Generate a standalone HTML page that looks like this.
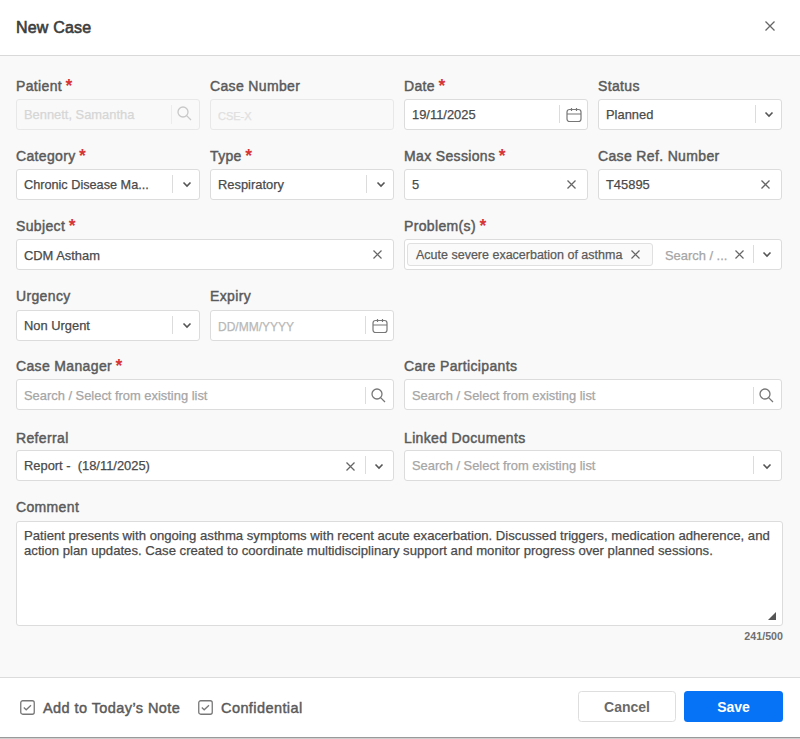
<!DOCTYPE html>
<html><head><meta charset="utf-8">
<style>
*{box-sizing:border-box;margin:0;padding:0}
html,body{width:800px;height:739px;overflow:hidden;background:#fff;font-family:"Liberation Sans",sans-serif}
.hdr{position:absolute;left:0;top:0;width:800px;height:56px;background:#fff;border-bottom:1px solid #d9d9d9}
.title{position:absolute;left:16px;top:18px;font-size:16px;-webkit-text-stroke:0.6px #3c3c3c;letter-spacing:0.2px;color:#3c3c3c;line-height:19px}
.close{position:absolute;left:764px;top:20px;width:12px;height:12px}
.body{position:absolute;left:0;top:56px;width:800px;height:621px;background:#f9f9f9}
.ftr{position:absolute;left:0;top:677px;width:800px;height:62px;background:#fff;border-top:1px solid #dcdcdc}
.bline{position:absolute;left:0;top:737px;width:800px;height:1px;background:#9a9a9a}
.bline2{position:absolute;left:0;top:738px;width:800px;height:1px;background:#cfcfcf}
.lbl{position:absolute;font-size:14px;color:#5a5a5a;-webkit-text-stroke:0.45px #5a5a5a;letter-spacing:0.35px;white-space:nowrap;line-height:17px}
.req{-webkit-text-stroke:0;color:#d63535;font-size:17.5px;font-weight:bold;letter-spacing:0;margin-left:3.5px;position:relative;top:0.5px;line-height:0}
.inp{position:absolute;height:31px;background:#fff;border:1px solid #dcdcdc;border-radius:3px}
.inp.dis{background:#f9f9f9;border-color:#e8e8e8}
.val{position:absolute;left:7px;top:7px;font-size:12.9px;color:#4a4a4a;-webkit-text-stroke:0.25px currentColor;white-space:nowrap;line-height:15px}
.ph{color:#a6a6a6}
.dph{color:#d6d6d6}
.sep{position:absolute;top:5px;width:1px;height:18px;background:#dcdcdc}
.ico{position:absolute}
.chip{position:absolute;left:2px;top:3px;width:246px;height:23px;background:#fafafa;border:1px solid #e0e0e0;border-radius:3px}
.cm{top:6px;font-size:13.15px;line-height:15px;width:755px;white-space:normal}
.cnt{position:absolute;left:730px;top:630px;width:53px;text-align:right;font-size:10.7px;font-weight:bold;color:#707070;line-height:12px}
svg{display:block}
.cb{position:absolute;top:22px}
.btn{position:absolute;top:13px;height:31px;border-radius:3.5px;font-size:14px;font-weight:bold;text-align:center}
</style></head><body>
<div class="hdr">
  <div class="title">New Case</div>
  <svg class="close" viewBox="0 0 12 12"><path d="M1.5 1.5L10.5 10.5M10.5 1.5L1.5 10.5" stroke="#666" stroke-width="1.3"/></svg>
</div>
<div class="body"></div>
<div class="lbl" style="left:16px;top:78px">Patient<span class="req">*</span></div>
<div class="inp dis" style="left:16px;top:99px;width:184px;"><div class="val dph">Bennett, Samantha</div><div class="sep" style="left:154px;background:#ececec;top:5px;height:19px"></div><svg class="ico" style="left:160px;top:6px" width="16" height="16" viewBox="0 0 16 16"><circle cx="6" cy="6" r="5" fill="none" stroke="#c8c8c8" stroke-width="1.3"/><path d="M9.6 9.6L14 14" stroke="#c8c8c8" stroke-width="1.3"/></svg></div>
<div class="lbl" style="left:210px;top:78px">Case Number</div>
<div class="inp dis" style="left:210px;top:99px;width:184px;"><div class="val dph" style="font-size:11px;top:9px;color:#e0e0e0">CSE-X</div></div>
<div class="lbl" style="left:404px;top:78px">Date<span class="req">*</span></div>
<div class="inp" style="left:404px;top:99px;width:184px;"><div class="val">19/11/2025</div><div class="sep" style="left:154px"></div><svg class="ico" style="left:161px;top:7px" width="16" height="16" viewBox="0 0 16 16"><rect x="1" y="2.5" width="14" height="12" rx="2.5" fill="none" stroke="#777" stroke-width="1.2"/><path d="M1 7H15M5.5 1V4M10.5 1V4" stroke="#777" stroke-width="1.2"/></svg></div>
<div class="lbl" style="left:598px;top:78px">Status</div>
<div class="inp" style="left:598px;top:99px;width:184px;"><div class="val">Planned</div><div class="sep" style="left:156px"></div><svg class="ico" style="left:165px;top:11px" width="10" height="7" viewBox="0 0 10 7"><path d="M1.5 1.5L5 5L8.5 1.5" fill="none" stroke="#555" stroke-width="1.6"/></svg></div>
<div class="lbl" style="left:16px;top:148px">Category<span class="req">*</span></div>
<div class="inp" style="left:16px;top:169px;width:184px;"><div class="val" style="font-size:12.7px;top:8px">Chronic Disease Ma...</div><div class="sep" style="left:155px"></div><svg class="ico" style="left:165px;top:11px" width="10" height="7" viewBox="0 0 10 7"><path d="M1.5 1.5L5 5L8.5 1.5" fill="none" stroke="#555" stroke-width="1.6"/></svg></div>
<div class="lbl" style="left:210px;top:148px">Type<span class="req">*</span></div>
<div class="inp" style="left:210px;top:169px;width:184px;"><div class="val">Respiratory</div><div class="sep" style="left:155px"></div><svg class="ico" style="left:165px;top:11px" width="10" height="7" viewBox="0 0 10 7"><path d="M1.5 1.5L5 5L8.5 1.5" fill="none" stroke="#555" stroke-width="1.6"/></svg></div>
<div class="lbl" style="left:404px;top:148px">Max Sessions<span class="req">*</span></div>
<div class="inp" style="left:404px;top:169px;width:184px;"><div class="val">5</div><svg class="ico" style="left:162px;top:10px" width="9" height="9" viewBox="0 0 9 9"><path d="M0.5 0.5L8.5 8.5M8.5 0.5L0.5 8.5" stroke="#666" stroke-width="1.25"/></svg></div>
<div class="lbl" style="left:598px;top:148px">Case Ref. Number</div>
<div class="inp" style="left:598px;top:169px;width:184px;"><div class="val">T45895</div><svg class="ico" style="left:162px;top:10px" width="9" height="9" viewBox="0 0 9 9"><path d="M0.5 0.5L8.5 8.5M8.5 0.5L0.5 8.5" stroke="#666" stroke-width="1.25"/></svg></div>
<div class="lbl" style="left:16px;top:218px">Subject<span class="req">*</span></div>
<div class="inp" style="left:16px;top:239px;width:378px;"><div class="val" style="top:8px">CDM Astham</div><svg class="ico" style="left:356px;top:10px" width="9" height="9" viewBox="0 0 9 9"><path d="M0.5 0.5L8.5 8.5M8.5 0.5L0.5 8.5" stroke="#666" stroke-width="1.25"/></svg></div>
<div class="lbl" style="left:404px;top:218px">Problem(s)<span class="req">*</span></div>
<div class="inp" style="left:404px;top:239px;width:378px;"><div class="chip"><div class="val" style="left:8px;top:4px;color:#5a5a5a;font-size:12.5px">Acute severe exacerbation of asthma</div><svg class="ico" style="left:223px;top:6px" width="9" height="9" viewBox="0 0 9 9"><path d="M0.5 0.5L8.5 8.5M8.5 0.5L0.5 8.5" stroke="#666" stroke-width="1.25"/></svg></div><div class="val ph" style="left:260px;top:8px">Search / ...</div><svg class="ico" style="left:330px;top:10px" width="9" height="9" viewBox="0 0 9 9"><path d="M0.5 0.5L8.5 8.5M8.5 0.5L0.5 8.5" stroke="#666" stroke-width="1.25"/></svg><div class="sep" style="left:348px"></div><svg class="ico" style="left:357px;top:11px" width="10" height="7" viewBox="0 0 10 7"><path d="M1.5 1.5L5 5L8.5 1.5" fill="none" stroke="#555" stroke-width="1.6"/></svg></div>
<div class="lbl" style="left:16px;top:288px">Urgency</div>
<div class="inp" style="left:16px;top:310px;width:184px;"><div class="val">Non Urgent</div><div class="sep" style="left:155px"></div><svg class="ico" style="left:165px;top:11px" width="10" height="7" viewBox="0 0 10 7"><path d="M1.5 1.5L5 5L8.5 1.5" fill="none" stroke="#555" stroke-width="1.6"/></svg></div>
<div class="lbl" style="left:210px;top:288px">Expiry</div>
<div class="inp" style="left:210px;top:310px;width:184px;"><div class="val ph" style="color:#b8b8b8;font-size:12px;top:9px">DD/MM/YYYY</div><div class="sep" style="left:154px"></div><svg class="ico" style="left:161px;top:7px" width="16" height="16" viewBox="0 0 16 16"><rect x="1" y="2.5" width="14" height="12" rx="2.5" fill="none" stroke="#777" stroke-width="1.2"/><path d="M1 7H15M5.5 1V4M10.5 1V4" stroke="#777" stroke-width="1.2"/></svg></div>
<div class="lbl" style="left:16px;top:358px">Case Manager<span class="req">*</span></div>
<div class="inp" style="left:16px;top:379px;width:378px;"><div class="val ph" style="font-size:12.9px;top:8px">Search / Select from existing list</div><div class="sep" style="left:348px;top:7px;height:17px"></div><svg class="ico" style="left:354px;top:8px" width="16" height="16" viewBox="0 0 16 16"><circle cx="6" cy="6" r="5" fill="none" stroke="#777" stroke-width="1.3"/><path d="M9.6 9.6L14 14" stroke="#777" stroke-width="1.3"/></svg></div>
<div class="lbl" style="left:404px;top:358px">Care Participants</div>
<div class="inp" style="left:404px;top:379px;width:378px;"><div class="val ph" style="font-size:12.9px;top:8px">Search / Select from existing list</div><div class="sep" style="left:348px;top:7px;height:17px"></div><svg class="ico" style="left:354px;top:8px" width="16" height="16" viewBox="0 0 16 16"><circle cx="6" cy="6" r="5" fill="none" stroke="#777" stroke-width="1.3"/><path d="M9.6 9.6L14 14" stroke="#777" stroke-width="1.3"/></svg></div>
<div class="lbl" style="left:16px;top:430px">Referral</div>
<div class="inp" style="left:16px;top:450px;width:378px;"><div class="val">Report -&nbsp; (18/11/2025)</div><svg class="ico" style="left:329px;top:11px" width="9" height="9" viewBox="0 0 9 9"><path d="M0.5 0.5L8.5 8.5M8.5 0.5L0.5 8.5" stroke="#666" stroke-width="1.25"/></svg><div class="sep" style="left:348px"></div><svg class="ico" style="left:357px;top:12px" width="10" height="7" viewBox="0 0 10 7"><path d="M1.5 1.5L5 5L8.5 1.5" fill="none" stroke="#555" stroke-width="1.6"/></svg></div>
<div class="lbl" style="left:404px;top:430px">Linked Documents</div>
<div class="inp" style="left:404px;top:450px;width:378px;"><div class="val ph" style="font-size:12.9px;top:7px">Search / Select from existing list</div><div class="sep" style="left:348px"></div><svg class="ico" style="left:357px;top:12px" width="10" height="7" viewBox="0 0 10 7"><path d="M1.5 1.5L5 5L8.5 1.5" fill="none" stroke="#555" stroke-width="1.6"/></svg></div>
<div class="lbl" style="left:16px;top:499px">Comment</div>
<div class="inp" style="left:16px;top:521px;width:767px;height:105px"><div class="val cm">Patient presents with ongoing asthma symptoms with recent acute exacerbation. Discussed triggers, medication adherence, and action plan updates. Case created to coordinate multidisciplinary support and monitor progress over planned sessions.</div><svg class="ico" style="left:751px;top:90px" width="8" height="8" viewBox="0 0 8 8"><path d="M8 0L8 8L0 8Z" fill="#555"/></svg></div>
<div class="cnt">241/500</div>
<div class="ftr">
  <svg class="cb" style="left:20px" width="15" height="15" viewBox="0 0 15 15"><rect x="0.75" y="0.75" width="13.5" height="13.5" rx="2" fill="none" stroke="#777" stroke-width="1.3"/><path d="M3.8 7.5L6.2 9.8L11 5.2" fill="none" stroke="#777" stroke-width="1.3"/></svg>
  <div class="lbl" style="left:43px;top:22px;font-size:14.5px;letter-spacing:0.42px">Add to Today’s Note</div>
  <svg class="cb" style="left:198px" width="15" height="15" viewBox="0 0 15 15"><rect x="0.75" y="0.75" width="13.5" height="13.5" rx="2" fill="none" stroke="#777" stroke-width="1.3"/><path d="M3.8 7.5L6.2 9.8L11 5.2" fill="none" stroke="#777" stroke-width="1.3"/></svg>
  <div class="lbl" style="left:221px;top:22px;font-size:14.5px;letter-spacing:0.42px">Confidential</div>
  <div class="btn" style="left:578px;width:98px;border:1px solid #dedede;background:#fff;color:#6a6a6a;line-height:31px">Cancel</div>
  <div class="btn" style="left:684px;width:99px;background:#0673f6;color:#fff;line-height:32px">Save</div>
</div>
<div class="bline"></div><div class="bline2"></div>
</body></html>
